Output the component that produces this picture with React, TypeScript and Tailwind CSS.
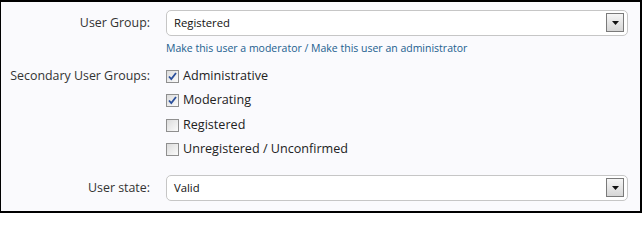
import React from "react";

function Select({ value }: { value: string }) {
  return (
    <div className="relative flex h-[26px] w-full items-center rounded-[5px] border border-[#c6c6c6] bg-white pl-[7px] text-[11.3px] text-[#111]">
      {value}
      <span className="absolute right-[3px] top-[2px] flex h-[19px] w-[18px] items-center justify-center border border-[#7a7a7a] bg-gradient-to-b from-[#f6f6f6] to-[#d6d6d6]">
        <svg width="7" height="4" viewBox="0 0 7 4">
          <path d="M0 0h7L3.5 4z" fill="#111" />
        </svg>
      </span>
    </div>
  );
}

function Check({ label, checked }: { label: string; checked?: boolean }) {
  return (
    <label className="flex h-[24.5px] items-center gap-[4px] text-[12.6px] text-[#222]">
      <span className="flex h-[13px] w-[13px] items-center justify-center border border-[#8f8f8f] bg-gradient-to-br from-[#dcdcdc] to-[#fbfbfb]">
        {checked && (
          <svg width="9" height="9" viewBox="0 0 9 9">
            <path d="M1 4.5l2.3 2.6L8 1" fill="none" stroke="#2a4f9c" strokeWidth="1.8" />
          </svg>
        )}
      </span>
      {label}
    </label>
  );
}

export default function App() {
  return (
    <div
      className="h-[213px] w-[642px] border-t-2 border-r-2 border-b-2 border-l border-black bg-[#fafafd] pr-[12px] pt-[8px]"
      style={{ fontFamily: '"Open Sans", "DejaVu Sans", sans-serif' }}
    >
      <div className="grid grid-cols-[149px_1fr] gap-x-4">
        <div className="flex h-[26px] items-center justify-end text-[12.4px] text-[#333]">User Group:</div>
        <div>
          <Select value="Registered" />
          <div className="mt-[5px] text-[10.5px] leading-[14px] text-[#22608f]">
            Make this user a moderator / Make this user an administrator
          </div>
        </div>

        <div className="mt-[9px] flex h-[24px] items-center justify-end text-[12.4px] text-[#333]">
          Secondary User Groups:
        </div>
        <div className="mt-[9px]">
          <Check label="Administrative" checked />
          <Check label="Moderating" checked />
          <Check label="Registered" />
          <Check label="Unregistered / Unconfirmed" />
        </div>

        <div className="mt-[13px] flex h-[26px] items-center justify-end text-[12.4px] text-[#333]">User state:</div>
        <div className="mt-[13px]">
          <Select value="Valid" />
        </div>
      </div>
    </div>
  );
}
